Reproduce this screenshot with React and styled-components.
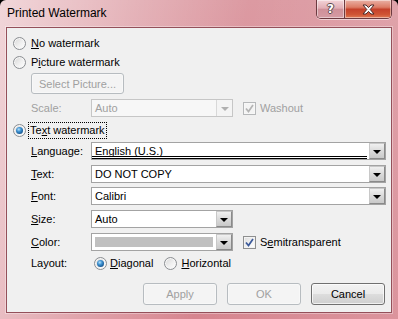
import React from 'react';
import styled, { createGlobalStyle } from 'styled-components';

const GlobalStyle = createGlobalStyle`
  html, body { margin: 0; padding: 0; background: #000; }
  body { font-family: "Liberation Sans", Arial, sans-serif; font-size: 11px; color: #000; }
`;

const Window = styled.div`
  width: 398px;
  height: 319px;
  box-sizing: border-box;
  display: flex;
  flex-direction: column;
  padding: 0 6px 6px 6px;
  border-radius: 6px 6px 0 0;
  background:
    linear-gradient(100deg, rgba(255,255,255,0.6) 0%, rgba(255,255,255,0.25) 30%, rgba(255,255,255,0) 55%, rgba(255,255,255,0.12) 100%),
    linear-gradient(180deg, #dc9aa2 0%, #d6858f 100%);
`;

const TitleBar = styled.div`
  height: 27px;
  flex-shrink: 0;
  display: flex;
  align-items: flex-start;
`;

const TitleText = styled.div`
  font-size: 12px;
  line-height: 26px;
  padding-left: 1px;
`;

const CaptionGroup = styled.div`
  margin-left: auto;
  display: flex;
  height: 18px;
  border: 1px solid #6c3a40;
  border-top: none;
  border-radius: 0 0 5px 5px;
  overflow: hidden;
  box-shadow: 0 1px 0 rgba(255,255,255,0.5);
`;

const CaptionButton = styled.div`
  width: ${p => p.$w}px;
  display: flex;
  align-items: center;
  justify-content: center;
  background: ${p => p.$close
    ? 'linear-gradient(180deg, #eab1a6 0%, #dc7c66 40%, #c5412b 52%, #cf5434 80%, #e07a55 100%)'
    : 'linear-gradient(180deg, #f3d4d8 0%, #e2aeb5 45%, #cf9099 52%, #d59ba3 100%)'};
  box-shadow: inset 0 0 0 1px rgba(255,255,255,0.45);
  & + & { border-left: 1px solid #6c3a40; }
`;

const HelpGlyph = styled.span`
  font-family: "DejaVu Sans", sans-serif;
  font-weight: bold;
  font-size: 12px;
  color: #fff;
  text-shadow: 1px 0 #5a4a4e, -1px 0 #5a4a4e, 0 1px #5a4a4e, 0 -1px #5a4a4e;
  line-height: 1;
`;

const Client = styled.div`
  flex: 1;
  display: flex;
  flex-direction: column;
  padding: 0 6px 0 0;
  background: #f0f0f0;
  border: 1px solid #94505a;
  box-shadow: 0 0 0 1px rgba(255,255,255,0.35);
`;

const Row = styled.div`
  display: flex;
  align-items: center;
  height: ${p => p.$h || 18}px;
  margin-top: ${p => p.$top}px;
  padding-left: ${p => p.$indent}px;
  flex-shrink: 0;
`;

const Acc = styled.span`
  text-decoration: underline;
  text-underline-offset: 1px;
`;

const RadioCircle = styled.span`
  position: relative;
  width: 13px;
  height: 13px;
  box-sizing: border-box;
  flex-shrink: 0;
  border-radius: 50%;
  border: 1px solid #8b8e92;
  background: linear-gradient(135deg, #d6d6d6 0%, #f0f0f0 55%, #ffffff 100%);
  box-shadow: inset 0 0 0 1px #f7f7f7;
  &::after {
    content: '';
    position: absolute;
    inset: 2px;
    border-radius: 50%;
    display: ${p => (p.$checked ? 'block' : 'none')};
    background: radial-gradient(circle at 40% 35%, #b9e2fa 0%, #3f93d2 35%, #1b5d98 70%, #123f6c 100%);
  }
`;

const RadioText = styled.span`
  margin-left: ${p => p.$gap ?? 3}px;
  padding: 0 1px;
  height: 15px;
  line-height: 15px;
  border: 1px dotted ${p => (p.$focus ? '#000' : 'transparent')};
  margin-right: ${p => p.$after || 0}px;
  white-space: nowrap;
`;

const CheckBox = styled.span`
  width: 13px;
  height: 13px;
  box-sizing: border-box;
  flex-shrink: 0;
  margin-left: 10px;
  display: flex;
  align-items: center;
  justify-content: center;
  border: 1px solid ${p => (p.$disabled ? '#b6b8ba' : '#8e8f8f')};
  background: ${p => (p.$disabled ? '#f4f4f4' : 'linear-gradient(135deg, #dcdcdc 0%, #f4f4f4 60%, #ffffff 100%)')};
  box-shadow: inset 0 0 0 1px ${p => (p.$disabled ? '#f7f7f7' : '#f3f3f3')};
`;

const CheckText = styled.span`
  margin-left: 4px;
  color: ${p => (p.$disabled ? '#a0a0a0' : '#000')};
`;

const FieldLabel = styled.span`
  width: 60px;
  flex-shrink: 0;
  color: ${p => (p.$disabled ? '#a0a0a0' : '#000')};
`;

const Combo = styled.div`
  width: ${p => p.$w}px;
  height: 18px;
  box-sizing: border-box;
  display: flex;
  align-items: stretch;
  border: 1px solid ${p => (p.$disabled ? '#c6c6c6' : '#a3a3a3')};
  background: ${p => (p.$disabled ? '#f7f7f7' : '#fff')};
  flex-shrink: 0;
`;

const ComboText = styled.div`
  flex: 1;
  display: flex;
  align-items: center;
  padding: 0 3px;
  color: ${p => (p.$disabled ? '#a0a0a0' : '#000')};
  box-sizing: border-box;
  border-bottom: ${p => (p.$double ? '3px double #000' : 'none')};
  margin-right: ${p => (p.$double ? 2 : 0)}px;
  padding-top: ${p => (p.$double ? 2 : 0)}px;
  white-space: nowrap;
`;

const Swatch = styled.div`
  flex: 1;
  margin: 3px;
  background: #c0c0c0;
`;

const DropButton = styled.div`
  width: 16px;
  flex-shrink: 0;
  box-sizing: border-box;
  display: flex;
  align-items: center;
  justify-content: center;
  ${p => (p.$disabled
    ? 'border-left: 1px solid #d8d8d8; background: #f4f4f4;'
    : 'border: 1px solid #9a9a9a; border-color: #c8c8c8 #8a8a8a #8a8a8a #c8c8c8; background: linear-gradient(180deg, #f0f0f0 0%, #dadada 50%, #c9c9c9 100%);')}
`;

const Arrow = styled.span`
  width: 0;
  height: 0;
  border-left: 4px solid transparent;
  border-right: 4px solid transparent;
  border-top: 4px solid ${p => (p.$disabled ? '#b0b0b0' : '#000')};
  margin-top: 1px;
`;

const PushButton = styled.div`
  width: ${p => p.$w || 74}px;
  height: ${p => p.$h || 22}px;
  box-sizing: border-box;
  display: flex;
  align-items: center;
  justify-content: center;
  border-radius: 3px;
  border: 1px solid ${p => (p.$disabled ? '#b7bcc0' : '#707070')};
  color: ${p => (p.$disabled ? '#a0a0a0' : '#000')};
  background: ${p => (p.$disabled
    ? '#f4f4f4'
    : 'linear-gradient(180deg, #f2f2f2 0%, #ebebeb 48%, #dddddd 52%, #cfcfcf 100%)')};
  box-shadow: inset 0 0 0 1px ${p => (p.$disabled ? '#f8f8f8' : 'rgba(255,255,255,0.7)')};
  font-size: 11px;
`;

const ButtonRow = styled.div`
  display: flex;
  justify-content: flex-end;
  gap: 10px;
  margin-top: 11px;
`;

const Spacer = styled.span`
  width: ${p => p.$w}px;
  flex-shrink: 0;
`;

const CloseIcon = () => (
  <svg width="13" height="11" viewBox="0 0 13 11">
    <path d="M1 1 H4 L6.5 3.6 L9 1 H12 L8.2 5.5 L12 10 H9 L6.5 7.4 L4 10 H1 L4.8 5.5 Z"
      fill="#fff" stroke="#4a2a2a" strokeWidth="1" strokeLinejoin="round" />
  </svg>
);

const CheckMark = ({ color }) => (
  <svg width="9" height="9" viewBox="0 0 9 9">
    <path d="M1 4.5 L3.5 7.5 L8 1" fill="none" stroke={color} strokeWidth="1.7" />
  </svg>
);

const Radio = ({ checked, focus, gap, after, children }) => (
  <>
    <RadioCircle $checked={checked} />
    <RadioText $focus={focus} $gap={gap} $after={after}>{children}</RadioText>
  </>
);

const DropCombo = ({ w, disabled, double, swatch, children }) => (
  <Combo $w={w} $disabled={disabled}>
    {swatch ? <Swatch /> : <ComboText $disabled={disabled} $double={double}>{children}</ComboText>}
    <DropButton $disabled={disabled}><Arrow $disabled={disabled} /></DropButton>
  </Combo>
);

export default function App() {
  return (
    <>
      <GlobalStyle />
      <Window>
        <TitleBar>
          <TitleText>Printed Watermark</TitleText>
          <CaptionGroup>
            <CaptionButton $w={27}><HelpGlyph>?</HelpGlyph></CaptionButton>
            <CaptionButton $w={46} $close><CloseIcon /></CaptionButton>
          </CaptionGroup>
        </TitleBar>
        <Client>
          <Row $top={6} $indent={6}>
            <Radio><Acc>N</Acc>o watermark</Radio>
          </Row>
          <Row $top={1} $indent={6}>
            <Radio>P<Acc>i</Acc>cture watermark</Radio>
          </Row>
          <Row $top={2} $indent={24} $h={21}>
            <PushButton $w={93} $h={21} $disabled>Select Picture...</PushButton>
          </Row>
          <Row $top={5} $indent={24}>
            <FieldLabel $disabled>Scale:</FieldLabel>
            <DropCombo w={142} disabled>Auto</DropCombo>
            <CheckBox $disabled><CheckMark color="#b4b4b4" /></CheckBox>
            <CheckText $disabled>Washout</CheckText>
          </Row>
          <Row $top={4} $indent={6}>
            <Radio checked focus gap={2}>Te<Acc>x</Acc>t watermark</Radio>
          </Row>
          <Row $top={3} $indent={24}>
            <FieldLabel><Acc>L</Acc>anguage:</FieldLabel>
            <DropCombo w={295} double>English (U.S.)</DropCombo>
          </Row>
          <Row $top={5} $indent={24}>
            <FieldLabel><Acc>T</Acc>ext:</FieldLabel>
            <DropCombo w={295}>DO NOT COPY</DropCombo>
          </Row>
          <Row $top={4} $indent={24}>
            <FieldLabel><Acc>F</Acc>ont:</FieldLabel>
            <DropCombo w={295}>Calibri</DropCombo>
          </Row>
          <Row $top={5} $indent={24}>
            <FieldLabel><Acc>S</Acc>ize:</FieldLabel>
            <DropCombo w={142}>Auto</DropCombo>
          </Row>
          <Row $top={5} $indent={24}>
            <FieldLabel><Acc>C</Acc>olor:</FieldLabel>
            <DropCombo w={142} swatch />
            <CheckBox><CheckMark color="#3c5a9a" /></CheckBox>
            <CheckText>S<Acc>e</Acc>mitransparent</CheckText>
          </Row>
          <Row $top={3} $indent={24}>
            <FieldLabel>Layout:</FieldLabel>
            <Spacer $w={3} />
            <Radio checked gap={1} after={9}><Acc>D</Acc>iagonal</Radio>
            <Radio gap={2}><Acc>H</Acc>orizontal</Radio>
          </Row>
          <ButtonRow>
            <PushButton $disabled>Apply</PushButton>
            <PushButton $disabled>OK</PushButton>
            <PushButton>Cancel</PushButton>
          </ButtonRow>
        </Client>
      </Window>
    </>
  );
}
